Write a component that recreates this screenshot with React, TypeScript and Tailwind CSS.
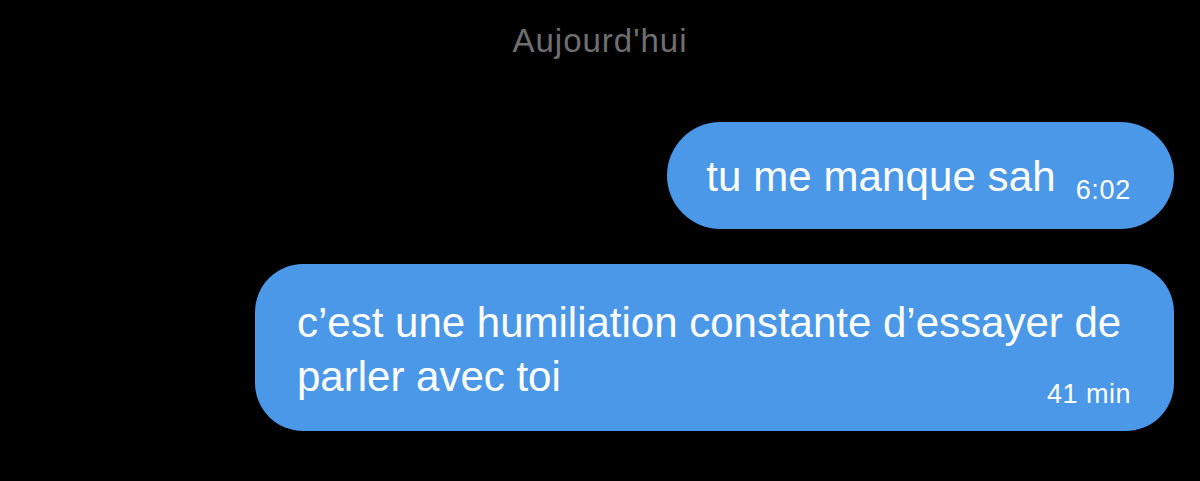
export default function App() {
  return (
    <div
      className="w-[1200px] h-[481px] bg-black overflow-hidden flex flex-col"
      style={{ fontFamily: '"Liberation Sans", Arial, sans-serif' }}
    >
      <div className="mt-[21px] h-[40px] leading-[40px] text-center text-[33px] text-[#6f6f6f] tracking-[1px]">
        Aujourd'hui
      </div>
      <div className="mt-[61px] self-end mr-[26px] flex items-end gap-[20px] bg-[#4b98e8] rounded-[54px] pl-[39px] pr-[43px] pt-[28px] pb-[25px] text-white">
        <span className="text-[42px] leading-[54px] tracking-[0.1px]">tu me manque sah</span>
        <span className="text-[27px] leading-[30px] mb-[-1px] tracking-[0.7px]">6:02</span>
      </div>
      <div className="mt-[35px] self-end mr-[26px] w-[919px] flex flex-col bg-[#4b98e8] rounded-[48px] pl-[42px] pr-[43px] pt-[32px] pb-[27px] text-white">
        <span className="text-[42px] leading-[54px]">
          c’est une humiliation constante d’essayer de
        </span>
        <div className="flex items-end justify-between">
          <span className="text-[42px] leading-[54px]">parler avec toi</span>
          <span className="text-[27px] leading-[30px] mb-[-5px] tracking-[0.5px]">41 min</span>
        </div>
      </div>
    </div>
  );
}
